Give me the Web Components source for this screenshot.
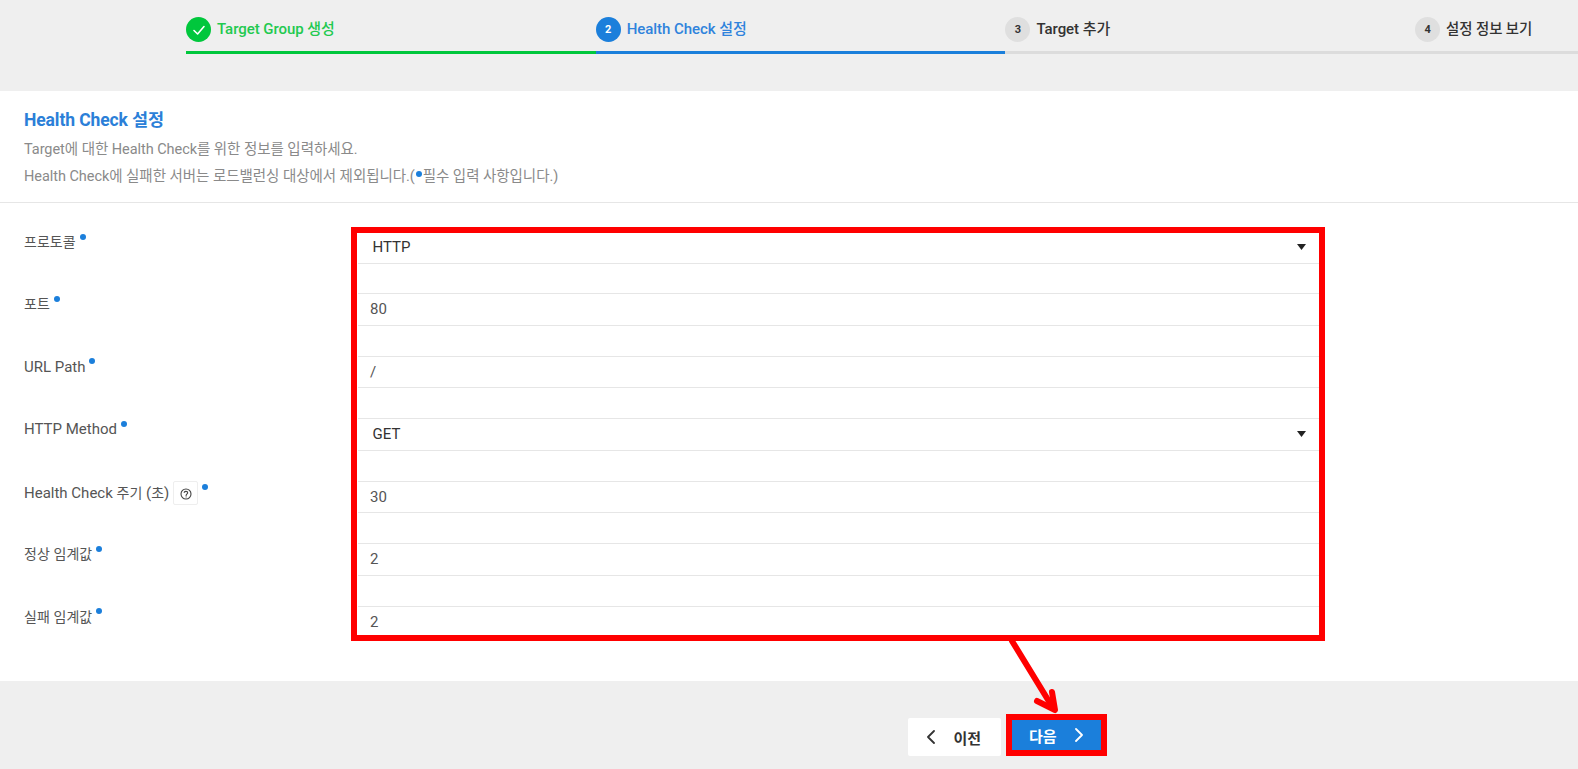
<!DOCTYPE html>
<html lang="ko"><head><meta charset="utf-8"><title>Health Check 설정</title>
<style>
html,body{margin:0;padding:0;background:#efefef}
body{font-family:Roboto,"Noto Sans CJK KR",sans-serif;color:#333;overflow:hidden}
</style></head><body>
<app-page>
  <wizard-steps>
    <wizard-step state="done" label="Target Group 생성"></wizard-step>
    <wizard-step state="active" num="2" label="Health Check 설정"></wizard-step>
    <wizard-step num="3" label="Target 추가"></wizard-step>
    <wizard-step num="4" label="설정 정보 보기" style="font-size:14.4px"></wizard-step>
  </wizard-steps>
  <form-panel>
    <span slot="title">Health Check 설정</span>
    <span slot="line1">Target에 대한 Health Check를 위한 정보를 입력하세요.</span>
    <span slot="line2">Health Check에 실패한 서버는 로드밸런싱 대상에서 제외됩니다.(<req-dot inline></req-dot>필수 입력 사항입니다.)</span>
    <form-row label="프로토콜" value="HTTP" select></form-row>
    <form-row label="포트" value="80"></form-row>
    <form-row label="URL Path" value="/"></form-row>
    <form-row label="HTTP Method" value="GET" select></form-row>
    <form-row label="Health Check 주기 (초)" value="30" help></form-row>
    <form-row label="정상 임계값" value="2"></form-row>
    <form-row label="실패 임계값" value="2"></form-row>
  </form-panel>
  <nav-bar>
    <nav-button dir="prev">이전</nav-button>
    <nav-button dir="next">다음</nav-button>
  </nav-bar>
  <call-out></call-out>
</app-page>
<script>
function def(name, css, html, init){
  customElements.define(name, class extends HTMLElement{
    connectedCallback(){
      if(this.shadowRoot) return;
      const r=this.attachShadow({mode:'open'});
      r.innerHTML='<style>'+css+'</style>'+(typeof html==='function'?html(this):html);
      if(init) init(this,r);
    }
  });
}
def('app-page',':host{display:block;position:relative;width:1578px;height:769px;overflow:hidden;background:#efefef}','<slot></slot>');
def('wizard-steps',':host{display:flex;height:91px;padding-left:186px;box-sizing:border-box;width:1578px;overflow:hidden}','<slot></slot>');
def('wizard-step',`
 :host{display:block;flex:0 0 409.7px;height:53.5px;box-sizing:border-box;padding-top:17px;border-bottom:3px solid #dcdcdc;color:#333;font-weight:500;font-size:15px}
 :host([state=done]){border-color:#00c73c;color:#22c94f}
 :host([state=active]){border-color:#1b7fdb;color:#2f83dc}
 .w{display:flex;align-items:center;gap:6px;height:25px;line-height:25px}
 .c{width:25px;height:25px;border-radius:50%;background:#dfdfdf;display:flex;align-items:center;justify-content:center;font-size:11px;font-weight:700;color:#333;flex:none}
 :host([state=done]) .c{background:#00c73c}
 :host([state=active]) .c{background:#1b7fdb;color:#fff}
 .l{letter-spacing:-.05px}
`,h=>{
  const inner=h.getAttribute('state')==='done'
   ?'<svg width="14" height="14" viewBox="0 0 14 14" fill="none" stroke="#fff" stroke-width="1.6" stroke-linecap="round" stroke-linejoin="round"><path d="M2 7.5 5.6 11 12 3.6"/></svg>'
   :h.getAttribute('num');
  return `<div class="w"><span class="c">${inner}</span><span class="l">${h.getAttribute('label')}</span></div>`;
});
def('form-panel',`
 :host{display:block;background:#fff;height:590px;box-sizing:border-box}
 header{height:112px;box-sizing:border-box;padding:18px 24px 0;border-bottom:1px solid #e6e6e6}
 h2{margin:0;font-size:17.5px;font-weight:700;color:#2b7fd8;line-height:22px;letter-spacing:-.1px}
 p{margin:0;font-size:14.5px;line-height:27px;color:#8a8a8a;letter-spacing:-.05px}
 .a{margin-top:4.5px}
 .rows{padding:28px 0 0 24px}
`,`<header><h2><slot name="title"></slot></h2><p class="a"><slot name="line1"></slot></p><p><slot name="line2"></slot></p></header><div class="rows"><slot></slot></div>`);
def('req-dot',`
 :host{display:inline-block;width:6px;height:6px;border-radius:50%;background:#1b7fdb;vertical-align:7.5px;margin-left:4px}
 :host([inline]){margin:0 1px 0 1px;vertical-align:4px}
`,'');
def('help-tip',`
 :host{display:inline-flex;align-items:center;justify-content:center;width:25px;height:24px;box-sizing:border-box;border:1px solid #eee;border-radius:2px;background:#fff;margin-left:4px;vertical-align:middle;position:relative;top:-1px}
`,'<svg style="margin-top:2px" width="12" height="12" viewBox="0 0 12 12" fill="none" stroke="#444" stroke-width="1.1" stroke-linecap="round" stroke-linejoin="round"><circle cx="6" cy="6" r="5"/><path d="M4.2 4.4C4.5 3.6 5.2 3.4 6 3.4 7 3.4 7.7 4 7.7 4.8 7.7 5.7 6.1 6 6.1 7.4"/><path d="M6.1 8.9v.1"/></svg>');
def('form-row',`
 :host{display:grid;grid-template-columns:334px 967px;height:62.45px;font-size:14px}
 .lab{padding-top:1px;color:#555;line-height:20px;white-space:nowrap}
 .lab b{font-weight:400;font-size:15px}
 .box{height:32.5px;box-sizing:border-box;border:1px solid #e6e6e6;border-width:1px 0;display:flex;align-items:center;justify-content:space-between;padding:0 19px .5px 12px;color:#555;line-height:20px;font-size:15px}
 :host([select]) .box{padding-left:14.5px;color:#333}
 svg{flex:none}
`,h=>`<div class="lab">${h.getAttribute('label').replace(/[A-Za-z ()]+/g,m=>'<b>'+m+'</b>')}${h.hasAttribute('help')?'<help-tip></help-tip>':''}<req-dot></req-dot></div>
 <div class="box"><span>${h.getAttribute('value')}</span>${h.hasAttribute('select')?'<svg width="9" height="6" viewBox="0 0 9 6"><path d="M0 0H9L4.5 6Z" fill="#222"/></svg>':''}</div>`);
def('nav-bar',`:host{display:flex;height:88px;box-sizing:border-box;padding:37px 0 0 908px;gap:10px;align-items:flex-start}`,'<slot></slot>');
def('nav-button',`
 :host{display:flex;align-items:center;box-sizing:border-box;height:38px;width:93px;background:#fff;border-radius:2px;font-size:15px;font-weight:700;color:#333;justify-content:space-between;padding:0 20px 0 19px}
 :host([dir=next]){width:90px;height:30px;margin-top:2px;background:#1b7fdb;color:#fff;border-radius:0;padding:0 18px 0 18px}
`,h=>{
  const n=h.getAttribute('dir')==='next';
  const i=`<svg width="8" height="14" viewBox="0 0 8 14" fill="none" stroke="${n?'#fff':'#333'}" stroke-width="1.8" stroke-linecap="round" stroke-linejoin="round"><path d="${n?'M1 1l6 6-6 6':'M7 1L1 7l6 6'}"/></svg>`;
  return n?`<slot></slot>${i}`:`${i}<slot></slot>`;
});
def('call-out',`
 :host{position:absolute;inset:0;pointer-events:none;display:block}
 .b{position:absolute;border:6px solid #f00;box-sizing:border-box}
 .x{left:351px;top:227px;width:974px;height:414px}
 .y{left:1006px;top:714px;width:101px;height:42px}
 svg{position:absolute;left:0;top:0}
`,`<div class="b x"></div><div class="b y"></div>
 <svg width="1578" height="769" viewBox="0 0 1578 769" fill="none" stroke="#f00" stroke-width="6" stroke-linecap="round" stroke-linejoin="round"><path d="M1012 641 1053 708"/><path d="M1037 701 1055 710 1052 692"/></svg>`);
</script>
</body></html>
